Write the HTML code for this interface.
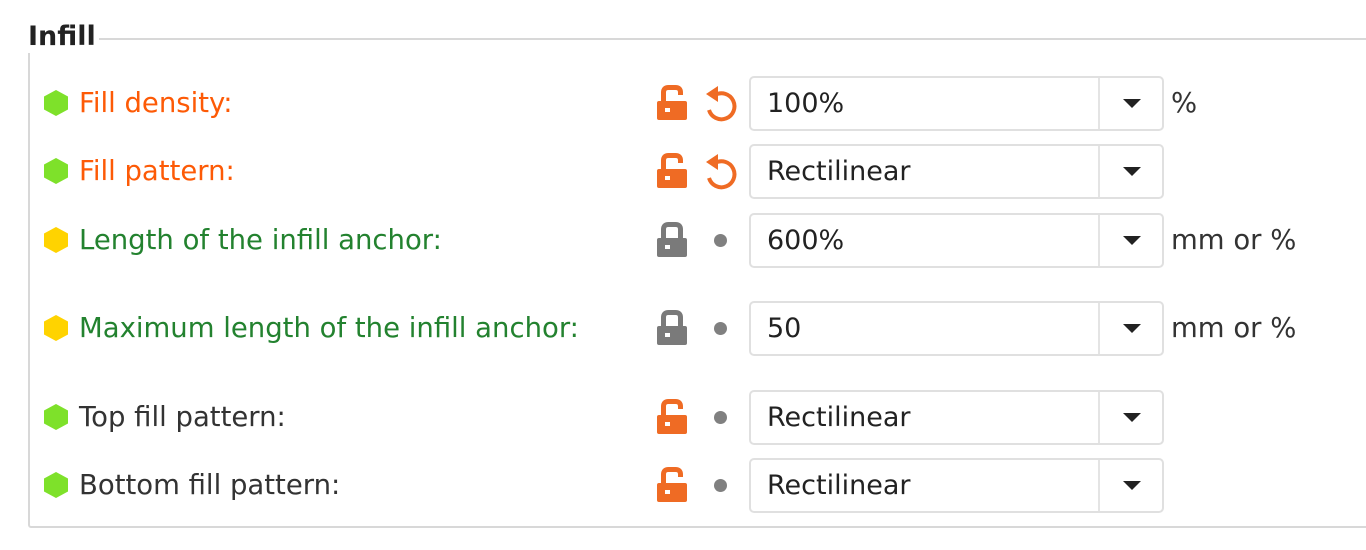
<!DOCTYPE html>
<html><head><meta charset="utf-8"><style>
*{margin:0;padding:0;box-sizing:border-box}
body{width:1366px;height:550px;background:#fff;position:relative;overflow:hidden;font-family:"DejaVu Sans","Liberation Sans",sans-serif;color:#333}
.frame{position:absolute;left:28px;top:38px;width:1360px;height:490px;border:2px solid #d8d8d8;border-radius:3px}
.title{position:absolute;left:26px;top:21px;background:#fff;padding:0 3px 0 2px;font-weight:bold;font-size:27px;color:#222;line-height:32px}
.row{position:absolute;left:0;width:1366px;height:54px}
.hex{position:absolute;left:44px;top:14px;width:24px;height:26px}
.lbl{position:absolute;left:79px;top:0;line-height:54px;font-size:27.5px;white-space:nowrap}
.o{color:#fd5a06}.g{color:#23822f}.d{color:#333}
.lock{position:absolute;left:655px;top:9px}
.reset{position:absolute;left:702px;top:8px}
.dot{position:absolute;left:714px;top:21px;width:13px;height:13px;border-radius:50%;background:#808080}
.box{position:absolute;left:749px;top:0;width:415px;height:55px;border:2px solid #e0e0e0;border-radius:5px;background:#fff}
.box span{position:absolute;left:16px;line-height:51px;font-size:27px;color:#222}
.sep{position:absolute;left:347px;top:0;width:2px;height:51px;background:#e4e4e4}
.arr{position:absolute;left:372px;top:21px;width:0;height:0;border-left:9px solid transparent;border-right:9px solid transparent;border-top:9px solid #222}
.unit{position:absolute;left:1171px;line-height:54px;font-size:27.5px;color:#333}
</style></head><body>
<div class="frame"></div>
<div class="title">Infill</div>

<svg width="0" height="0" style="position:absolute">
<defs>
<symbol id="hg" viewBox="0 0 24 26"><polygon points="12,0 24,6.5 24,19.5 12,26 0,19.5 0,6.5" fill="#7ee12a"/></symbol>
<symbol id="hy" viewBox="0 0 24 26"><polygon points="12,0 24,6.5 24,19.5 12,26 0,19.5 0,6.5" fill="#ffd300"/></symbol>
<symbol id="lo" viewBox="0 0 34 36"><path d="M8.5 16 V7.5 Q8.5 2.5 13.5 2.5 H20.5 Q25.5 2.5 25.5 7.5 V10" fill="none" stroke="#ef6b24" stroke-width="5"/><rect x="2" y="16" width="30" height="19" rx="2" fill="#ef6b24"/><rect x="10" y="23" width="5" height="4" fill="#fff"/></symbol>
<symbol id="lc" viewBox="0 0 34 36"><path d="M8.5 16 V7.5 Q8.5 2.5 13.5 2.5 H20.5 Q25.5 2.5 25.5 7.5 V16" fill="none" stroke="#7a7a7a" stroke-width="5"/><rect x="2" y="16" width="30" height="19" rx="2" fill="#7a7a7a"/><rect x="10" y="23" width="5" height="4" fill="#fff"/></symbol>
<symbol id="rs" viewBox="0 0 36 38"><path d="M13 11 A13 13 0 1 1 7 26" fill="none" stroke="#ef6b24" stroke-width="4"/><polygon points="4,10 16,2 16,18" fill="#ef6b24"/></symbol>
</defs></svg>

<div class="row" style="top:76px">
<svg class="hex"><use href="#hg"/></svg><div class="lbl o">Fill density:</div>
<svg class="lock" width="34" height="36"><use href="#lo"/></svg><svg class="reset" width="36" height="38"><use href="#rs"/></svg>
<div class="box"><span>100%</span><div class="sep"></div><div class="arr"></div></div><div class="unit">%</div></div>

<div class="row" style="top:144px">
<svg class="hex"><use href="#hg"/></svg><div class="lbl o">Fill pattern:</div>
<svg class="lock" width="34" height="36"><use href="#lo"/></svg><svg class="reset" width="36" height="38"><use href="#rs"/></svg>
<div class="box"><span>Rectilinear</span><div class="sep"></div><div class="arr"></div></div></div>

<div class="row" style="top:213px">
<svg class="hex"><use href="#hy"/></svg><div class="lbl g">Length of the infill anchor:</div>
<svg class="lock" width="34" height="36"><use href="#lc"/></svg><div class="dot"></div>
<div class="box"><span>600%</span><div class="sep"></div><div class="arr"></div></div><div class="unit">mm or %</div></div>

<div class="row" style="top:301px">
<svg class="hex"><use href="#hy"/></svg><div class="lbl g">Maximum length of the infill anchor:</div>
<svg class="lock" width="34" height="36"><use href="#lc"/></svg><div class="dot"></div>
<div class="box"><span>50</span><div class="sep"></div><div class="arr"></div></div><div class="unit">mm or %</div></div>

<div class="row" style="top:390px">
<svg class="hex"><use href="#hg"/></svg><div class="lbl d">Top fill pattern:</div>
<svg class="lock" width="34" height="36"><use href="#lo"/></svg><div class="dot"></div>
<div class="box"><span>Rectilinear</span><div class="sep"></div><div class="arr"></div></div></div>

<div class="row" style="top:458px">
<svg class="hex"><use href="#hg"/></svg><div class="lbl d">Bottom fill pattern:</div>
<svg class="lock" width="34" height="36"><use href="#lo"/></svg><div class="dot"></div>
<div class="box"><span>Rectilinear</span><div class="sep"></div><div class="arr"></div></div></div>
</body></html>
